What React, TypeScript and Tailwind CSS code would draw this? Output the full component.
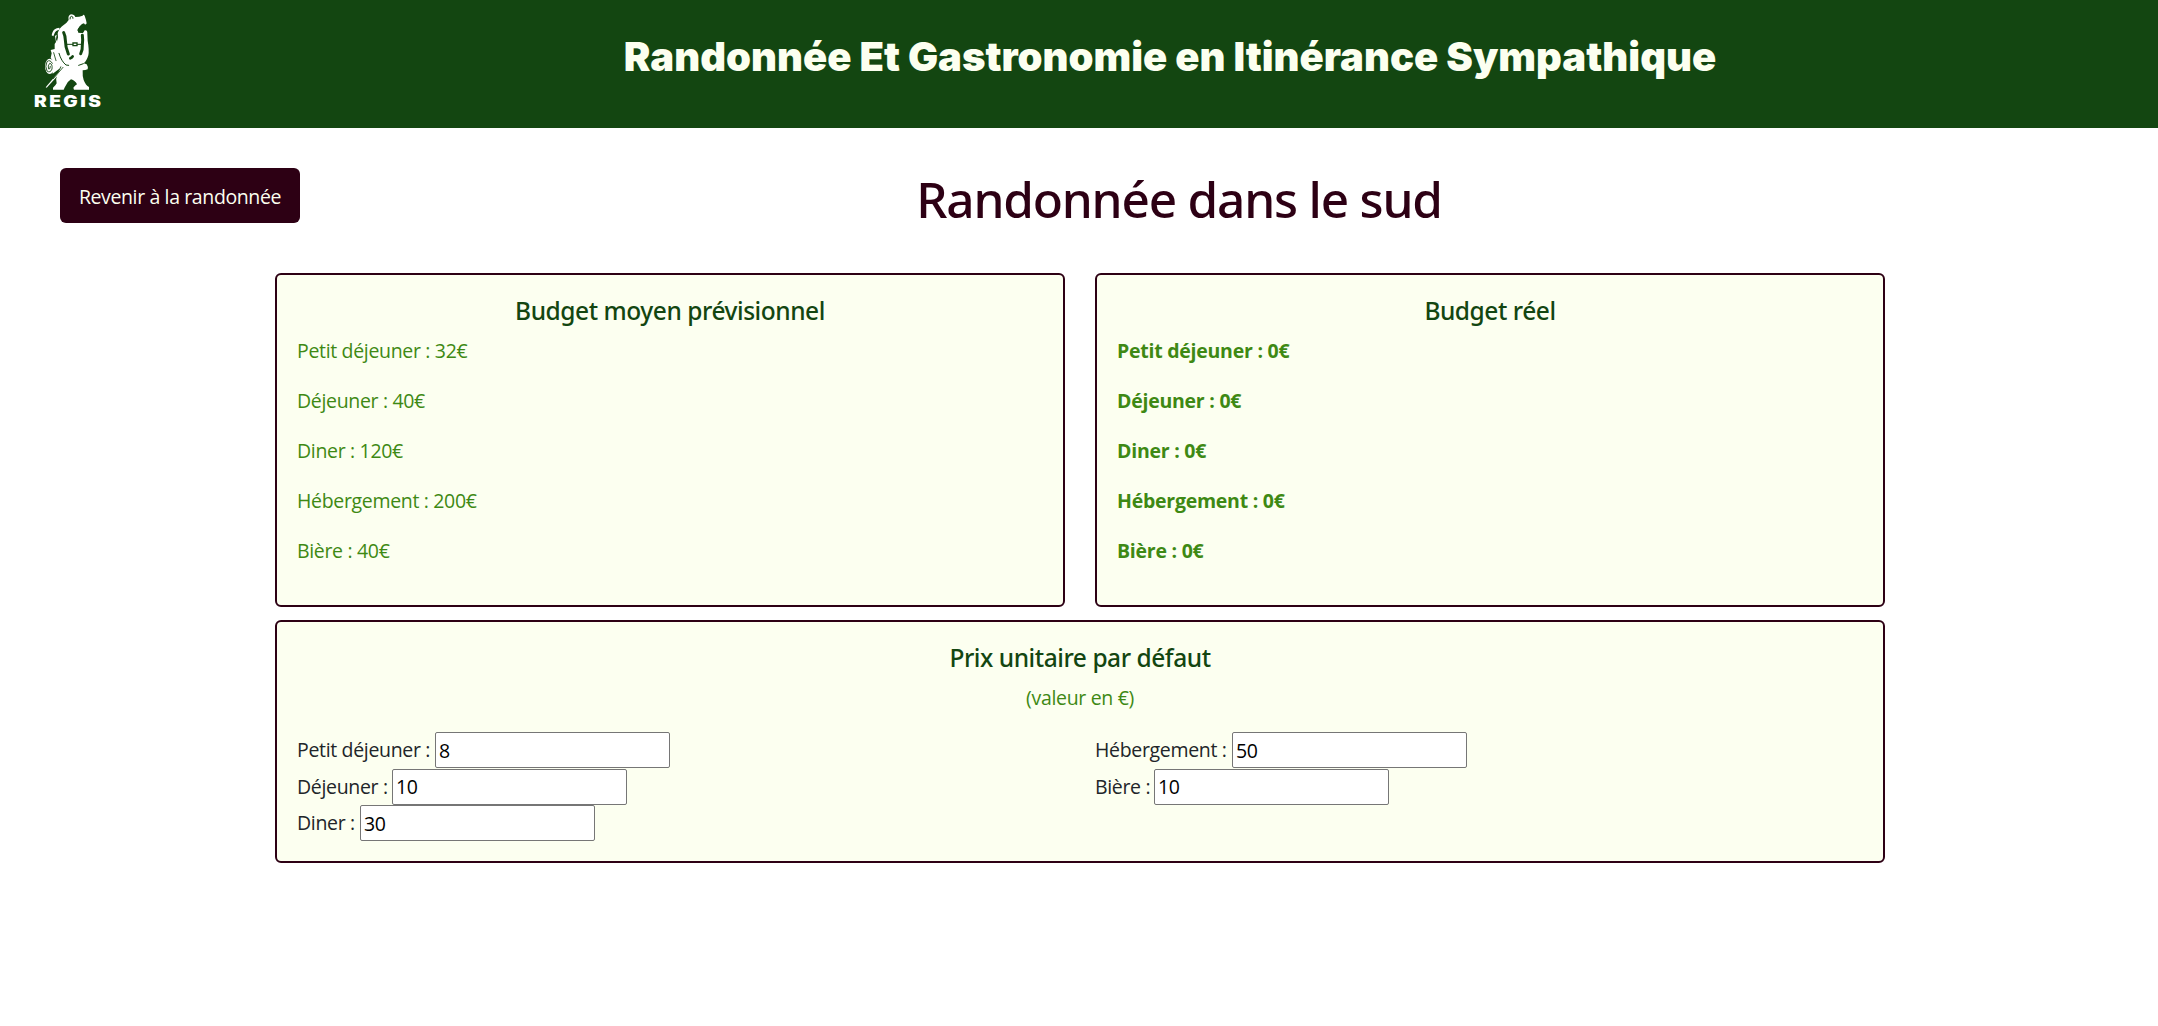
import { useState } from "react";
import type { ReactNode } from "react";

type Meal = { label: string; value: string };

const FORECAST: Meal[] = [
  { label: "Petit déjeuner", value: "32" },
  { label: "Déjeuner", value: "40" },
  { label: "Diner", value: "120" },
  { label: "Hébergement", value: "200" },
  { label: "Bière", value: "40" },
];

const ACTUAL: Meal[] = FORECAST.map((m) => ({ ...m, value: "0" }));

function Logo() {
  return (
    <svg viewBox="0 0 300 390" className="h-[130px] w-[100px] shrink-0" role="img" aria-label="Regis">
      <g fill="#ffffff">
        {/* bear: head, torso and legs */}
        <path d="M146 60 Q143 46 153 43 Q163 43 166 51 Q178 51 188 47 Q190 42 194 47 L198 60 L200 70 Q196 77 192 70 L186 72 Q178 78 173 88 L175 98 L189 99 L194 91 Q203 90 202 101 L203 122 Q208 150 205 166 Q200 183 191 190 L200 193 Q206 202 203 208 Q196 211 188 211 Q187 228 191 240 Q197 256 207 261 L207 269 L162 269 L160 263 Q166 256 171 253 Q166 242 153 238 Q141 246 137 257 Q134 261 131 269 L99 269 L99 263 Q107 257 110 250 Q106 236 113 222 L124 200 L114 180 L112 160 Q108 130 114 112 L113 100 Q118 84 130 76 Q140 70 146 60 Z" />
        {/* backpack and bedroll */}
        <path d="M97 98 Q101 85 118 83 L119 89 Q106 92 104 99 L100 109 L95 106 Z" />
        <path d="M105 108 L110 104 L108 118 L113 130 L118 165 L126 186 L126 196 L107 202 L97 180 L92 174 L95 160 L92 150 L104 147 L104 132 L108 126 Z" />
        <ellipse cx="89" cy="199" rx="14" ry="23" />
        <path d="M94 179 L128 190 L118 206 L98 221 Z" />
        {/* walking stick */}
        <path d="M77 262 L124 207 L128 211 L80 263 Z" />
      </g>
      <g fill="none" stroke="#134611" strokeLinecap="round">
        <path d="M150 57 Q149 49 155 49 Q160 50 159 55" strokeWidth="3" />
        <path d="M131 98 Q136 108 136 120 Q136 140 145 162" strokeWidth="9" />
        <path d="M187 106 Q189 120 187 135 Q188 151 182 161" strokeWidth="9" />
        <path d="M138 133 L186 133" strokeWidth="3" />
        <path d="M117 160 Q124 184 138 195 L146 196 M176 196 L190 191" strokeWidth="3" />
        <path d="M151 175 Q156 173 158 169" strokeWidth="8" />
        <path d="M97 190 Q90 177 81 185 Q74 200 81 213 Q91 220 96 207 Q98 191 89 190 Q82 197 86 207 Q91 209 91 199" strokeWidth="2.6" />
        <path d="M101 158 L108 182 M129 202 L100 236" strokeWidth="2.5" />
      </g>
      <path fill="#134611" d="M172 91 L180 79 L193 80 L190 94 L186 98 L176 97 Z M157 127 h16 v12 h-16 Z" />
      <path fill="#ffffff" d="M161 131 h8 v4 h-8 Z" />
      <text
        x="42"
        y="321"
        fill="#ffffff"
        textLength="208"
        lengthAdjust="spacingAndGlyphs"
        className="font-['Inter'] text-[47px] font-black tracking-[6px]"
      >
        REGIS
      </text>
    </svg>
  );
}

function Card({ title, children, className = "" }: { title: string; children: ReactNode; className?: string }) {
  return (
    <section className={`rounded-[6px] border-2 border-[#2d0014] bg-[#fcfff0] p-5 ${className}`}>
      <h2 className="mb-[10px] pt-px text-center font-['Noto_Sans',sans-serif] text-[24.5px] leading-[30px] font-medium tracking-[-0.45px] text-[#134611]">
        {title}
      </h2>
      {children}
    </section>
  );
}

function Lines({ items, className }: { items: Meal[]; className: string }) {
  return (
    <div className={`text-[#3e8914] ${className}`}>
      {items.map((m) => (
        <p key={m.label} className="mb-5">
          {m.label} : {m.value}€
        </p>
      ))}
    </div>
  );
}

function Field({ label, initial, width }: { label: string; initial: string; width: string }) {
  const [value, setValue] = useState(initial);
  return (
    <label className="flex h-[36.5px] items-start">
      <span className={`pt-[3px] whitespace-nowrap ${width}`}>{label} :</span>
      <input
        value={value}
        onChange={(e) => setValue(e.target.value)}
        className="h-[36px] w-[235px] rounded-[2px] border border-[#767676] bg-white px-[3px] text-black outline-none"
      />
    </label>
  );
}

export default function App() {
  return (
    <div className="min-h-screen bg-white font-['Open_Sans',sans-serif] text-[19.5px] leading-[30px] tracking-[-0.33px] text-[#212529]">
      <header className="flex h-[128px] bg-[#134611]">
        <div className="w-[182px] shrink-0 pl-5">
          <Logo />
        </div>
        <h1 className="flex-1 pt-[33px] text-center font-['Inter',sans-serif] text-[40px] leading-[48px] font-black tracking-normal text-[#fcfff0]">
          Randonnée Et Gastronomie en Itinérance Sympathique
        </h1>
      </header>

      <div className="flex pt-10 pl-[60px]">
        <button className="h-[55px] w-[240px] rounded-[6px] bg-[#2d0014] pt-[2px] tracking-[-0.38px] whitespace-nowrap text-[#fcfff0]">
          Revenir à la randonnée
        </button>
        <h2 className="ml-[200px] w-[1358px] pt-px text-center font-['Noto_Sans',sans-serif] text-[49.5px] leading-[60px] font-medium tracking-[-1.2px] text-[#2d0014]">
          Randonnée dans le sud
        </h2>
      </div>

      <main className="mt-[44px] ml-[275px] w-[1610px]">
        <div className="grid grid-cols-2 gap-x-[30px]">
          <Card title="Budget moyen prévisionnel" className="h-[334px]">
            <Lines items={FORECAST} className="" />
          </Card>
          <Card title="Budget réel" className="h-[334px]">
            <Lines items={ACTUAL} className="font-bold tracking-[-0.25px]" />
          </Card>
        </div>
        <Card title="Prix unitaire par défaut" className="mt-[13px] h-[243px]">
          <p className="mb-[19px] text-center text-[#3e8914]">(valeur en €)</p>
          <div className="grid grid-cols-[798px_1fr]">
            <div>
              <Field label="Petit déjeuner" initial="8" width="w-[138px]" />
              <Field label="Déjeuner" initial="10" width="w-[95px]" />
              <Field label="Diner" initial="30" width="w-[63px]" />
            </div>
            <div>
              <Field label="Hébergement" initial="50" width="w-[137px]" />
              <Field label="Bière" initial="10" width="w-[59px]" />
            </div>
          </div>
        </Card>
      </main>
    </div>
  );
}
